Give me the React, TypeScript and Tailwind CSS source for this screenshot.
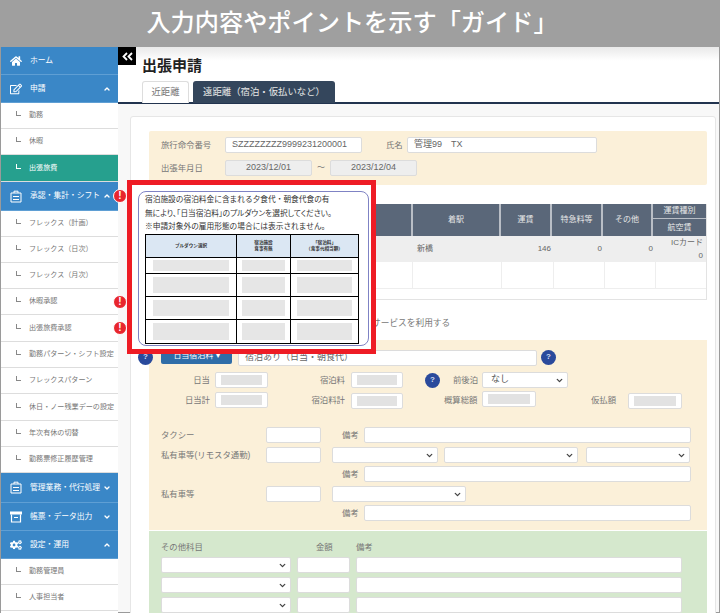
import { ReactNode } from "react";
import { ChevronDown, ChevronUp } from "lucide-react";
import { FaCogs, FaHome, FaRegEdit } from "react-icons/fa";

type MenuItem = {
  label: string;
  h: number;
  top?: boolean;
  active?: boolean;
  icon?: ReactNode;
  chevron?: "up" | "down";
  alert?: boolean;
};

const ClipIcon = () => (
  <svg width="12" height="13" viewBox="0 0 12 13" fill="none" stroke="white" strokeWidth="1">
    <path d="M1 3h10v9H1z" />
    <path d="M4 3V1.2h4V3M3 6.5h6M3 9.5h6" />
  </svg>
);

const BoxIcon = () => (
  <svg width="12" height="12" viewBox="0 0 12 12" fill="none" stroke="white" strokeWidth="1.2">
    <path d="M0.5 1h11v2h-11z" fill="white" />
    <path d="M1.5 3.5v7.5h9V3.5M4 6.5h4" />
  </svg>
);

const menu: MenuItem[] = [
  { label: "ホーム", h: 28, top: true, icon: <FaHome size={12} color="white" /> },
  { label: "申請", h: 28, top: true, icon: <FaRegEdit size={12} color="white" />, chevron: "up" },
  { label: "勤務", h: 26 },
  { label: "休暇", h: 26 },
  { label: "出張旅費", h: 27, active: true },
  { label: "承認・集計・シフト", h: 29, top: true, icon: <ClipIcon />, chevron: "up", alert: true },
  { label: "フレックス（計画）", h: 26 },
  { label: "フレックス（日次）", h: 26 },
  { label: "フレックス（月次）", h: 26 },
  { label: "休暇承認", h: 26, alert: true },
  { label: "出張旅費承認", h: 27, alert: true },
  { label: "勤務パターン・シフト設定", h: 26 },
  { label: "フレックスパターン", h: 26 },
  { label: "休日・ノー残業デーの設定", h: 27 },
  { label: "年次有休の切替", h: 26 },
  { label: "勤務票修正履歴管理", h: 26 },
  { label: "管理業務・代行処理", h: 30, top: true, icon: <ClipIcon />, chevron: "down" },
  { label: "帳票・データ出力", h: 28, top: true, icon: <BoxIcon />, chevron: "down" },
  { label: "設定・運用", h: 28, top: true, icon: <FaCogs size={12} color="white" />, chevron: "up" },
  { label: "勤務管理員", h: 26 },
  { label: "人事担当者", h: 26 },
];

function AlertDot() {
  return (
    <span className="absolute right-[-9px] top-1/2 z-20 flex h-[14px] w-[14px] -translate-y-1/2 items-center justify-center rounded-full border border-white bg-[#e8262d] text-[10px] font-bold leading-none text-white">
      !
    </span>
  );
}

function SideRow({ item }: { item: MenuItem }) {
  const tone = item.top
    ? "bg-[#3a87c7] text-white border-[#5f9fd4]"
    : item.active
      ? "bg-[#26a08e] text-white border-[#dddddd]"
      : "bg-white text-[#777777] border-[#dddddd]";

  return (
    <div
      className={`relative flex shrink-0 items-center border-b ${tone}`}
      style={{ height: item.h }}
    >
      {item.top ? (
        <>
          <span className="flex w-[29px] shrink-0 justify-center pl-[1px]">{item.icon}</span>
          <span className="whitespace-nowrap text-[7.8px]">{item.label}</span>
          {item.chevron === "up" && <ChevronUp size={8} strokeWidth={4} className="absolute right-[7px]" />}
          {item.chevron === "down" && <ChevronDown size={8} strokeWidth={4} className="absolute right-[7px]" />}
        </>
      ) : (
        <>
          <span
            className={`ml-[15px] mr-[8px] h-[5px] w-[5px] shrink-0 -translate-y-[2px] border-b border-l ${
              item.active ? "border-white" : "border-[#888888]"
            }`}
          />
          <span className="whitespace-nowrap text-[7.1px]">{item.label}</span>
        </>
      )}
      {item.alert && <AlertDot />}
    </div>
  );
}

function Input({ w, className = "bg-white", children }: { w: string; className?: string; children?: ReactNode }) {
  return (
    <div
      className={`flex h-[16px] shrink-0 items-center rounded-[2px] border border-[#dcdcdc] px-[6px] text-[9px] text-[#666666] ${w} ${className}`}
    >
      {children}
    </div>
  );
}

function Masked({ w, className = "" }: { w: string; className?: string }) {
  return (
    <div className={`flex h-[16px] shrink-0 items-center rounded-[2px] border border-[#dcdcdc] bg-white px-[5px] py-[2px] ${w} ${className}`}>
      <div className="h-full w-full bg-[#e2e2e2]" />
    </div>
  );
}

function Select({ w, className = "", children }: { w: string; className?: string; children?: ReactNode }) {
  return (
    <div
      className={`flex h-[16px] shrink-0 items-center justify-between rounded-[2px] border border-[#dcdcdc] bg-white pl-[8px] pr-[3px] text-[9px] text-[#555555] ${w} ${className}`}
    >
      <span>{children}</span>
      <ChevronDown size={9} strokeWidth={3.5} className="text-[#444444]" />
    </div>
  );
}

function Help({ className = "" }: { className?: string }) {
  return (
    <span
      className={`flex h-[15px] w-[15px] shrink-0 items-center justify-center rounded-full bg-[#2a4a9c] text-[8px] font-bold text-[#d5ddf2] ${className}`}
    >
      ?
    </span>
  );
}

function Label({ className = "", children }: { className?: string; children: ReactNode }) {
  return <span className={`shrink-0 whitespace-nowrap text-[8.4px] text-[#777777] ${className}`}>{children}</span>;
}

const guideRows = [
  { h: "h-[16px]", py: "py-[2px]" },
  { h: "h-[23px]", py: "py-[3px]" },
  { h: "h-[23px]", py: "py-[3px]" },
  { h: "h-[23px]", py: "py-[3px]" },
];

function GuideCallout() {
  return (
    <div className="absolute left-[127px] top-[180px] z-30 h-[174px] w-[249px] border-[5px] border-[#ee1c25] bg-white">
      <div className="ml-[6px] mt-[6px] h-[155px] w-[231px] rounded-[8px] border border-[#7f83c4] bg-white pl-[6px] pt-[1px]">
        <p className="h-[13.5px] whitespace-nowrap text-[7.7px] leading-[13.5px] text-[#333333]">
          宿泊施設の宿泊料金に含まれる夕食代・朝食代食の有
        </p>
        <p className="h-[13.5px] whitespace-nowrap text-[7.7px] leading-[13.5px] text-[#333333] [font-feature-settings:'palt']">
          無により、「日当宿泊料」のプルダウンを選択してください。
        </p>
        <p className="h-[13.5px] whitespace-nowrap text-[7.7px] leading-[13.5px] text-[#333333]">
          ※申請対象外の雇用形態の場合には表示されません。
        </p>
        <div className="w-[214px] border border-black">
          <div className="grid h-[23px] grid-cols-[91px_54px_1fr] border-b border-black bg-[#dbe7f3] text-center text-[4.6px] font-bold leading-[6px] text-[#333333]">
            <div className="flex items-center justify-center border-r border-black">プルダウン選択</div>
            <div className="flex items-center justify-center border-r border-black">
              宿泊施設
              <br />
              食事有無
            </div>
            <div className="flex items-center justify-center">
              「宿泊料」
              <br />
              （食事代相当額）
            </div>
          </div>
          {guideRows.map((row, i) => (
            <div
              key={i}
              className={`grid grid-cols-[91px_54px_1fr] ${row.h} ${i < 3 ? "border-b border-black" : ""}`}
            >
              <div className={`border-r border-black px-[7px] ${row.py}`}>
                <div className="h-full bg-[#e6e6e6]" />
              </div>
              <div className={`border-r border-black px-[5px] ${row.py}`}>
                <div className="h-full bg-[#e6e6e6]" />
              </div>
              <div className={`px-[6px] ${row.py}`}>
                <div className="h-full bg-[#e6e6e6]" />
              </div>
            </div>
          ))}
        </div>
      </div>
    </div>
  );
}

function FareTable() {
  const headCell = "flex items-center justify-center border-r-2 border-[#b9bec6]";
  const bodyCols = "grid grid-cols-[263px_89px_52px_51px_51px_1fr]";
  return (
    <div className="mt-[19px] w-[558px] border-x border-b border-[#e3e3e3] text-[#666666]">
      <div className="grid h-[32px] grid-cols-[263px_88px_51px_51px_50px_1fr] bg-[#5a6779] text-[8px] text-[#e8e8e8]">
        <div className={headCell} />
        <div className={headCell}>着駅</div>
        <div className={headCell}>運賃</div>
        <div className={headCell}>特急料等</div>
        <div className={headCell}>その他</div>
        <div className="flex flex-col">
          <div className="flex h-[15px] items-center justify-center border-b border-[#b9bec6]">運賃種別</div>
          <div className="flex flex-1 items-center justify-center">航空賃</div>
        </div>
      </div>
      <div className={`${bodyCols} h-[26px] bg-[#eeeeee] text-[8px]`}>
        <div className="flex items-center justify-end" />
        <div className="flex items-center pl-[4px]">新橋</div>
        <div className="flex items-center justify-end pr-[3px]">146</div>
        <div className="flex items-center justify-end pr-[3px]">0</div>
        <div className="flex items-center justify-end pr-[3px]">0</div>
        <div className="flex flex-col items-end justify-center pr-[3px] leading-[13px]">
          <span>ICカード</span>
          <span>0</span>
        </div>
      </div>
      <div className={`${bodyCols} h-[27px] border-b border-[#eeeeee]`}>
        <div className="border-r border-[#eeeeee]" />
        <div className="border-r border-[#eeeeee]" />
        <div className="border-r border-[#eeeeee]" />
        <div className="border-r border-[#eeeeee]" />
        <div className="border-r border-[#eeeeee]" />
        <div />
      </div>
      <div className="h-[10px]" />
    </div>
  );
}

export default function App() {
  return (
    <div className="relative h-[613px] w-[720px] overflow-hidden bg-white font-['Liberation_Sans','Noto_Sans_CJK_JP',sans-serif]">
      <header className="flex h-[47px] items-center justify-center bg-[#9f9f9f] pr-[16px] text-[24.2px] font-medium text-white">
        入力内容やポイントを示す「ガイド」
      </header>

      <div className="flex h-[566px] border-l border-[#9a9a9a]">
        {/* Sidebar */}
        <nav className="relative z-10 flex w-[117px] shrink-0 flex-col">
          {menu.map((item) => (
            <SideRow key={item.label} item={item} />
          ))}
        </nav>

        {/* Main */}
        <main className="min-w-0 flex-1 border-b border-r border-[#9a9a9a] bg-[#f8f8f8]">
          <div className="h-[57px] border-b-2 border-[#22344f] bg-gradient-to-b from-[#e9e9e9] via-white via-25% to-white pl-[24px]">
            <h1 className="pt-[9px] text-[15px] font-bold leading-[20px] text-[#222222]">出張申請</h1>
            <div className="mt-[5px] flex gap-[4px]">
              <div className="flex h-[22px] w-[47px] items-center justify-center rounded-t-[3px] border border-b-0 border-[#dddddd] bg-white text-[9.3px] text-[#777777]">
                近距離
              </div>
              <div className="flex h-[22px] w-[142px] items-center justify-center rounded-t-[3px] bg-[#34465c] text-[9.4px] text-[#e6e6e6]">
                遠距離（宿泊・仮払いなど）
              </div>
            </div>
          </div>

          <section className="ml-[12px] mt-[12px] h-[520px] w-[586px] overflow-hidden rounded-t-[3px] border border-[#e6e6e6] bg-white pl-[18px] pt-[14px]">
            <div className="h-[54px] w-[558px] rounded-[2px] bg-[#fbf0d9] pl-[12px] pt-[6px]">
              <div className="flex items-center">
                <Label className="w-[64px]">旅行命令番号</Label>
                <Input w="w-[137px]">SZZZZZZZZ9999231200001</Input>
                <Label className="ml-[24px] w-[21px]">氏名</Label>
                <Input w="w-[190px]">管理99　TX</Input>
              </div>
              <div className="mt-[7px] flex items-center">
                <Label className="w-[64px]">出張年月日</Label>
                <Input w="w-[87px]" className="justify-center bg-[#eeeeee] text-[9.5px]">
                  2023/12/01
                </Input>
                <span className="w-[18px] text-center text-[8px] text-[#777777]">～</span>
                <Input w="w-[87px]" className="justify-center bg-[#eeeeee] text-[9.5px]">
                  2023/12/04
                </Input>
              </div>
            </div>

            <FareTable />

            <p className="mt-[16px] h-[14px] whitespace-nowrap pl-[223px] text-[8.7px] leading-[14px] text-[#777777]">
              サービスを利用する
            </p>

            {/* Lodging and transport */}
            <div className="mt-[10px] h-[190px] w-[558px] bg-[#fbf0d9] pt-[8px]">
              <div className="-ml-[11px] flex h-[18px] items-center">
                <Help />
                <div className="ml-[8px] flex h-[16px] w-[71px] shrink-0 items-center justify-center self-start rounded-[2px] bg-[#2f6da8] text-[8px] text-white">
                  日当宿泊料 ▾
                </div>
                <Input w="w-[299px] ml-[6px] self-end">宿泊あり（日当・朝食代）</Input>
                <Help className="ml-[4px]" />
              </div>

              <div className="mt-[6px] flex items-center">
                <Label className="w-[61px] text-right">日当</Label>
                <Masked w="ml-[5px] w-[53px]" />
                <Label className="w-[77px] text-right">宿泊料</Label>
                <Masked w="ml-[6px] w-[52px]" />
                <Help className="ml-[22px]" />
                <Label className="ml-[13px] w-[25px]">前後泊</Label>
                <Select w="ml-[4px] w-[86px]">なし</Select>
              </div>

              <div className="mt-[4px] flex items-center">
                <Label className="w-[61px] text-right">日当計</Label>
                <Masked w="ml-[5px] w-[53px]" />
                <Label className="w-[77px] text-right">宿泊料計</Label>
                <Masked w="ml-[6px] w-[52px]" className="translate-y-px" />
                <Label className="ml-[41px] w-[34px]">概算総額</Label>
                <Masked w="ml-[4px] w-[54px]" className="-translate-y-px" />
                <Label className="ml-[55px] w-[26px]">仮払額</Label>
                <Masked w="ml-[11px] w-[54px]" className="translate-y-px" />
              </div>

              <div className="mt-[19px] flex items-center pl-[12px]">
                <Label className="w-[105px]">タクシー</Label>
                <Input w="w-[55px]" />
                <Label className="ml-[21px] w-[17px]">備考</Label>
                <Input w="ml-[5px] w-[327px]" />
              </div>

              <div className="mt-[4px] flex items-center pl-[12px]">
                <Label className="w-[105px]">私有車等(リモスタ通勤)</Label>
                <Input w="w-[55px]" />
                <Select w="ml-[11px] w-[106px]" />
                <Select w="ml-[6px] w-[134px]" />
                <Select w="ml-[8px] w-[104px]" />
              </div>

              <div className="mt-[3px] flex items-center pl-[193px]">
                <Label className="w-[17px]">備考</Label>
                <Input w="ml-[5px] w-[327px]" />
              </div>

              <div className="mt-[4px] flex items-center pl-[12px]">
                <Label className="w-[105px]">私有車等</Label>
                <Input w="w-[55px]" />
                <Select w="ml-[11px] w-[134px]" />
              </div>

              <div className="mt-[3px] flex items-center pl-[193px]">
                <Label className="w-[17px]">備考</Label>
                <Input w="ml-[5px] w-[327px]" />
              </div>
            </div>

            {/* Other items */}
            <div className="mt-[1px] h-[90px] w-[558px] bg-[#d5e8cd] pl-[12px] pt-[10px]">
              <div className="grid h-[12px] grid-cols-[155px_40px_1fr] items-center">
                <Label>その他科目</Label>
                <Label>金額</Label>
                <Label>備考</Label>
              </div>
              {[0, 1, 2].map((row) => (
                <div key={row} className="mt-[4px] flex">
                  <Select w="w-[130px]" />
                  <Input w="ml-[6px] w-[53px]" />
                  <Input w="ml-[6px] w-[326px]" />
                </div>
              ))}
            </div>
          </section>
        </main>
      </div>

      {/* Sidebar toggle */}
      <div className="absolute left-[118px] top-[47px] z-20 flex h-[18px] w-[18px] items-center justify-center bg-black text-[13px] font-bold leading-none text-white">
        <svg width="11" height="9" viewBox="0 0 11 9" fill="none" stroke="white" strokeWidth="1.8">
          <path d="M5 1L1.5 4.5L5 8M10 1L6.5 4.5L10 8" />
        </svg>
      </div>

      <GuideCallout />
    </div>
  );
}
